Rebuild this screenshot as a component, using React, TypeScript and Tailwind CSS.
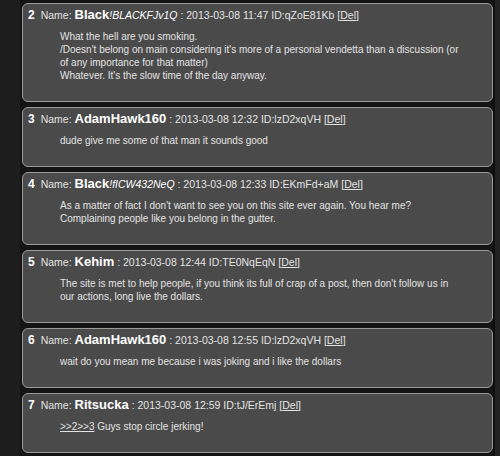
const posts = [
  {
    no: 2,
    name: 'Black',
    trip: '!BLACKFJv1Q',
    date: '2013-03-08 11:47',
    id: 'qZoE81Kb',
    lines: [
      'What the hell are you smoking.',
      "/Doesn't belong on main considering it's more of a personal vendetta than a discussion (or",
      'of any importance for that matter)',
      "Whatever. It's the slow time of the day anyway.",
    ],
  },
  { no: 3, name: 'AdamHawk160', date: '2013-03-08 12:32', id: 'lzD2xqVH', lines: ['dude give me some of that man it sounds good'] },
  {
    no: 4,
    name: 'Black',
    trip: '!fICW432NeQ',
    date: '2013-03-08 12:33',
    id: 'EKmFd+aM',
    lines: [
      "As a matter of fact I don't want to see you on this site ever again. You hear me?",
      'Complaining people like you belong in the gutter.',
    ],
  },
  {
    no: 5,
    name: 'Kehim',
    date: '2013-03-08 12:44',
    id: 'TE0NqEqN',
    lines: [
      "The site is met to help people, if you think its full of crap of a post, then don't follow us in",
      'our actions, long live the dollars.',
    ],
  },
  { no: 6, name: 'AdamHawk160', date: '2013-03-08 12:55', id: 'lzD2xqVH', lines: ['wait do you mean me because i was joking and i like the dollars'] },
  { no: 7, name: 'Ritsucka', date: '2013-03-08 12:59', id: 'tJ/ErEmj', lines: [], quote: true },
];

export default function App() {
  return (
    <div className="flex w-[500px] h-[456px] overflow-hidden bg-[#141414] font-['Liberation_Sans',Arial,sans-serif]">
      <div className="w-[20px] shrink-0 bg-[#1d1d1d]" />
      <div className="flex flex-col gap-[5px] w-[471px] ml-[2px] pt-[3px]">
        {posts.map((p) => (
          <div key={p.no} className="rounded-[6px] border border-[#9a9a9a] bg-[#4a4a4a] pt-[2px] pb-[19px] text-[#e3e3e3]">
            <div className="h-[17px] leading-[17px] pl-[5px] text-[10.5px] whitespace-nowrap">
              <span className="font-bold text-white text-[12px]">{p.no}</span>
              <span className="ml-[6px]">Name: </span>
              <span className="font-bold text-white text-[13px]">{p.name}</span>
              {p.trip && <span className="italic text-white text-[10.5px]">{p.trip}</span>}
              <span> : {p.date} ID:{p.id} [<span className="underline">Del</span>]</span>
            </div>
            <div className="mt-[7px] ml-[37px] text-[10px] leading-[13px] whitespace-nowrap">
              {p.lines.map((l, i) => (
                <div key={i}>{l}</div>
              ))}
              {p.quote && (
                <div>
                  <span className="underline">&gt;&gt;2&gt;&gt;3</span> Guys stop circle jerking!
                </div>
              )}
            </div>
          </div>
        ))}
      </div>
      <div className="w-[2px] shrink-0 bg-[#0d0d0d]" />
      <div className="flex-1 bg-[#222]" />
    </div>
  );
}
